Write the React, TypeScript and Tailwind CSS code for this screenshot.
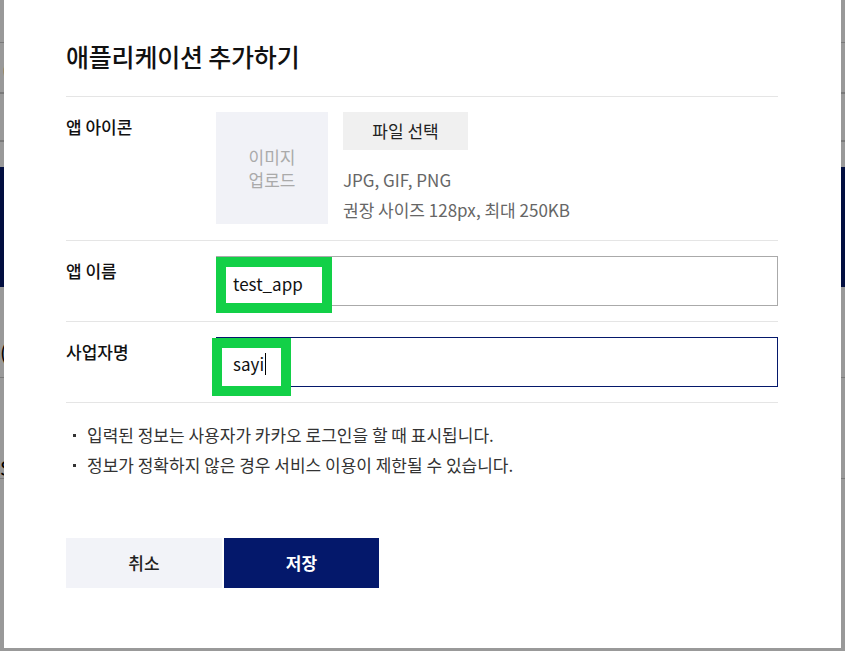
import React from "react";

const font = { fontFamily: '"Noto Sans CJK KR", "Noto Sans", sans-serif' };

const FormRow = ({ label, children }: { label: string; children: React.ReactNode }) => (
  <div className="flex border-t border-[#e5e5e5] py-[15px]">
    <div className="w-[150px] shrink-0 pt-[3px] text-[17px] leading-[24px] font-medium text-[#111]">{label}</div>
    <div className="flex-1">{children}</div>
  </div>
);

const Highlight = ({ className }: { className: string }) => (
  <div className={`pointer-events-none absolute border-[10px] border-[#12d047] ${className}`} />
);

export default function App() {
  return (
    <div style={font} className="relative h-[651px] w-full overflow-hidden bg-white">
      {/* page behind the dialog */}
      <div className="flex flex-col">
        <div className="h-[43px] border-b border-[#ccc]" />
        <div className="h-[51px] border-b-2 border-[#ccc] pl-[2px] pt-[14px] text-[22px] leading-none text-black">(</div>
        <div className="h-[48px] border-b-2 border-[#ccc]" />
        <div className="h-[25px]" />
        <div className="h-[120px] bg-[#04186b]" />
        <div className="h-[90px] pt-[55px] text-[20px] leading-none">(</div>
        <div className="h-[1px] bg-[#ccc]" />
        <div className="h-[100px] pt-[80px] text-[20px] leading-none">S</div>
        <div className="h-[1px] bg-[#ccc]" />
      </div>

      {/* dim layer */}
      <div className="absolute inset-0 bg-black/40" />

      {/* dialog */}
      <div className="absolute left-[4px] top-0 h-[648px] w-[837px] bg-white pl-[62px] pr-[63px]">
        <h2 className="pt-[38px] pb-[21px] text-[25px] leading-[37px] font-medium tracking-[-0.2px] text-[#111]">
          애플리케이션 추가하기
        </h2>

        <FormRow label="앱 아이콘">
          <div className="flex h-[113px] gap-[15px]">
            <div className="flex h-[112px] w-[112px] flex-col items-center justify-center bg-[#f1f2f7] text-center text-[17px] leading-[23px] text-[#aaa]">
              <span>이미지</span>
              <span>업로드</span>
            </div>
            <div className="flex flex-col">
              <button className="h-[38px] w-[125px] shrink-0 bg-[#f0f0f0] text-[17px] text-[#222]">파일 선택</button>
              <p className="mt-[15px] text-[17px] leading-[30px] text-[#666]">JPG, GIF, PNG</p>
              <p className="text-[17px] leading-[30px] text-[#666]">권장 사이즈 128px, 최대 250KB</p>
            </div>
          </div>
        </FormRow>

        <FormRow label="앱 이름">
          <input
            readOnly
            value="test_app"
            className="block h-[50px] w-full border border-[#aaa] px-[16px] pt-[4px] text-[17px] text-[#111] outline-none"
          />
        </FormRow>

        <FormRow label="사업자명">
          <div className="flex h-[50px] w-full items-center border border-[#04186b] px-[16px] pt-[4px] text-[17px] text-[#111]">
            sayi<span className="ml-[1px] inline-block h-[22px] w-[1px] bg-black" />
          </div>
        </FormRow>

        <ul className="border-t border-[#e5e5e5] pt-[17px] text-[17px] leading-[30px] text-[#333]">
          <li className="flex items-center">
            <span className="mr-[11px] ml-[7px] inline-block h-[3px] w-[3px] bg-[#333]" />
            입력된 정보는 사용자가 카카오 로그인을 할 때 표시됩니다.
          </li>
          <li className="flex items-center">
            <span className="mr-[11px] ml-[7px] inline-block h-[3px] w-[3px] bg-[#333]" />
            정보가 정확하지 않은 경우 서비스 이용이 제한될 수 있습니다.
          </li>
        </ul>

        <div className="mt-[58px] flex gap-[2px]">
          <button className="h-[50px] w-[156px] bg-[#f2f3f8] text-[17px] font-medium text-[#222]">취소</button>
          <button className="h-[50px] w-[155px] bg-[#04186b] text-[17px] font-bold text-white">저장</button>
        </div>
      </div>

      {/* annotation boxes */}
      <Highlight className="left-[216px] top-[257px] h-[56px] w-[116px]" />
      <Highlight className="left-[212px] top-[338px] h-[58px] w-[79px]" />
    </div>
  );
}
